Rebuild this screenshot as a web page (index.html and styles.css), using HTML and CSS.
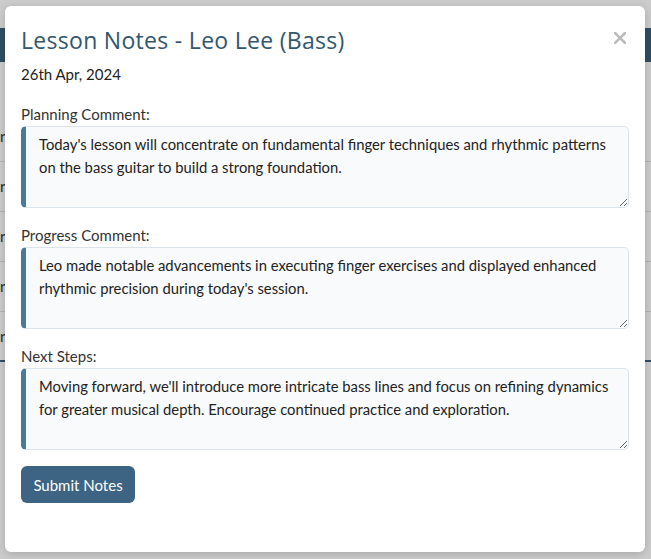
FILE: index.html
```html
<!DOCTYPE html>
<html lang="en">
<head>
<meta charset="utf-8">
<title>Lesson Notes</title>
<link rel="stylesheet" href="styles.css">
</head>
<body>
<div class="page">
  <div class="page-top"></div>
  <div class="page-bar"></div>
  <div class="page-head"></div>
  <div class="page-row">r</div>
  <div class="page-row">r</div>
  <div class="page-row">r</div>
  <div class="page-row">r</div>
  <div class="page-row last">r</div>
</div>

<div class="modal" role="dialog" aria-labelledby="modal-title">
  <div class="modal-header">
    <h2 class="modal-title" id="modal-title">Lesson Notes - Leo Lee (Bass)</h2>
    <button class="modal-close" type="button" aria-label="Close">
      <svg width="12" height="12" viewBox="0 0 12 12" aria-hidden="true">
        <path d="M1 1 L11 11 M11 1 L1 11" stroke="#bcbcbc" stroke-width="2.6" stroke-linecap="square" fill="none"/>
      </svg>
    </button>
  </div>
  <p class="modal-date">26th Apr, 2024</p>
  <form class="notes-form">
    <label class="field-label" for="planning">Planning Comment:</label>
    <textarea class="field-text" id="planning">Today's lesson will concentrate on fundamental finger techniques and rhythmic patterns on the bass guitar to build a strong foundation.</textarea>
    <label class="field-label" for="progress">Progress Comment:</label>
    <textarea class="field-text" id="progress">Leo made notable advancements in executing finger exercises and displayed enhanced rhythmic precision during today's session.</textarea>
    <label class="field-label" for="next">Next Steps:</label>
    <textarea class="field-text" id="next">Moving forward, we'll introduce more intricate bass lines and focus on refining dynamics for greater musical depth. Encourage continued practice and exploration.</textarea>
    <button class="submit-btn" type="submit">Submit Notes</button>
  </form>
</div>
</body>
</html>
```

FILE: styles.css
```css
html, body {
  margin: 0;
  padding: 0;
}
body {
  background: #cccccc;
  font-family: "Lato", "Liberation Sans", sans-serif;
  width: 651px;
  height: 559px;
  overflow: hidden;
  position: relative;
}
.page {
  display: flex;
  flex-direction: column;
}
.page-top {
  height: 28px;
}
.page-bar {
  height: 34px;
  background: #2f4e63;
}
.page-head {
  height: 50px;
}
.page-row {
  height: 49px;
  border-bottom: 1px solid #b3b3b3;
  font-size: 15px;
  color: #2a2a2a;
  line-height: 49px;
  padding-left: 0;
}
.page-row.last {
  height: 48px;
  border-bottom: 2px solid #2f4e63;
}
.modal {
  position: absolute;
  left: 5px;
  top: 6px;
  width: 640px;
  height: 546px;
  box-sizing: border-box;
  background: #ffffff;
  border-radius: 6px;
  box-shadow: 0 2px 10px rgba(0, 0, 0, 0.18);
  padding: 19px 16px 16px;
}
.modal-header {
  display: flex;
  justify-content: space-between;
  align-items: flex-start;
}
.modal-title {
  margin: 0;
  font-family: "Open Sans", "Lato", sans-serif;
  font-size: 23px;
  letter-spacing: 0.3px;
  font-weight: 400;
  line-height: 30px;
  color: #33566f;
}
.modal-close {
  display: flex;
  border: 0;
  background: none;
  padding: 0;
  margin: 7px 3px 0 0;
  cursor: pointer;
}
.modal-date {
  margin: 8px 0 0;
  font-size: 15px;
  line-height: 22px;
  color: #222;
}
.notes-form {
  display: flex;
  flex-direction: column;
  align-items: flex-start;
  margin-top: 17px;
}
.field-label {
  font-size: 15px;
  line-height: 24px;
  color: #333;
}
.field-text {
  width: 100%;
  height: 82px;
  box-sizing: border-box;
  margin: 0 0 15px;
  padding: 6px 12px 6px 13px;
  font-family: inherit;
  font-size: 14.8px;
  line-height: 23px;
  color: #222;
  background: #f9fafb;
  border: 1px solid #dbe4ec;
  border-left: 5px solid #4a7a9b;
  border-radius: 5px;
  outline: none;
  resize: vertical;
}
.submit-btn {
  margin-top: 1px;
  width: 114px;
  height: 37px;
  border: 0;
  border-radius: 6px;
  background: #3d6482;
  color: #ffffff;
  font-family: inherit;
  font-size: 15px;
  cursor: pointer;
}
```
